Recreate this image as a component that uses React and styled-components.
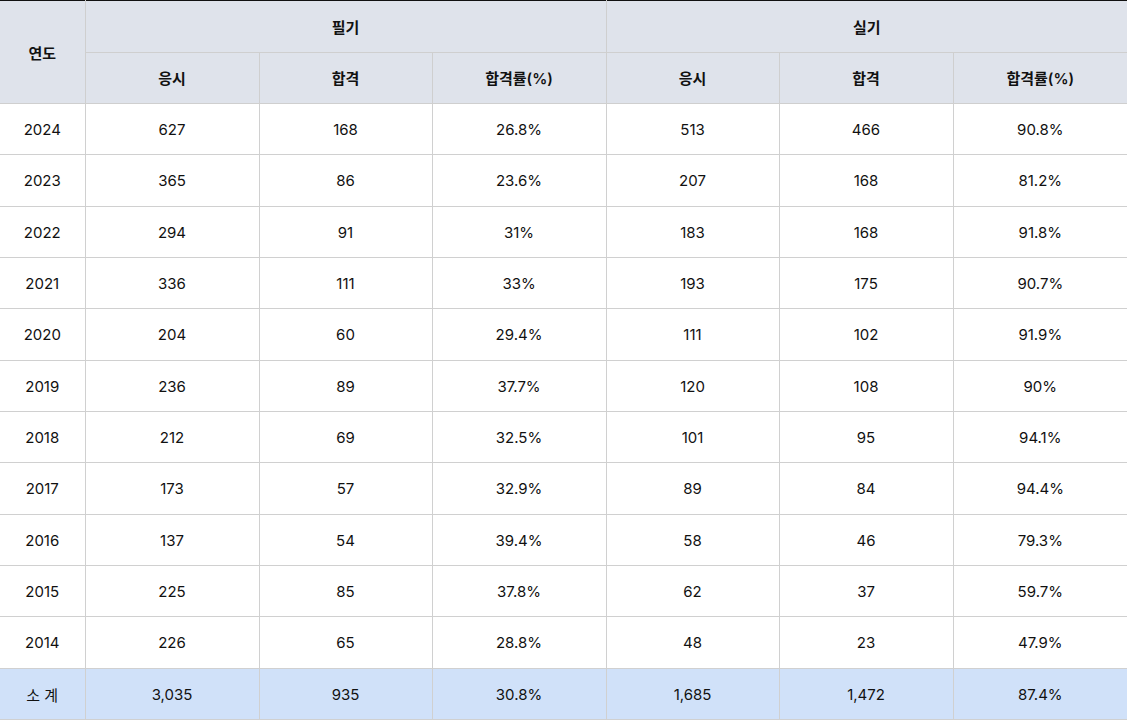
import React from "react";
import styled, { createGlobalStyle } from "styled-components";

const Global = createGlobalStyle`
  html, body { margin: 0; padding: 0; background: #fff; }
  body { font-family: Inter, "Noto Sans CJK KR", "Noto Sans", sans-serif; }
`;

const Table = styled.table`
  width: 1127px;
  border-collapse: collapse;
  table-layout: fixed;
  border-top: 1px solid #111;
  font-size: 15px;
  color: #111;
`;

const Col = styled.col`
  width: ${(p) => p.$w}px;
`;

const Th = styled.th`
  background: #dfe3eb;
  font-weight: 600;
  height: 50.5px;
  padding: 0;
  text-align: center;
  vertical-align: middle;
  border: 1px solid #cfcfcf;
  border-top: none;
  &:first-child { border-left: none; }
  &:last-child { border-right: none; }
`;

const Row = styled.tr`
  background: ${(p) => (p.$total ? "#d0e1f9" : "#fff")};
`;

const Td = styled.td`
  height: 49.33px;
  padding: 1px 0 0;
  text-align: center;
  vertical-align: middle;
  border: 1px solid #d0d0d0;
  &:first-child { border-left: none; }
  &:last-child { border-right: none; }
`;

const data = [
  ["2024", "627", "168", "26.8%", "513", "466", "90.8%"],
  ["2023", "365", "86", "23.6%", "207", "168", "81.2%"],
  ["2022", "294", "91", "31%", "183", "168", "91.8%"],
  ["2021", "336", "111", "33%", "193", "175", "90.7%"],
  ["2020", "204", "60", "29.4%", "111", "102", "91.9%"],
  ["2019", "236", "89", "37.7%", "120", "108", "90%"],
  ["2018", "212", "69", "32.5%", "101", "95", "94.1%"],
  ["2017", "173", "57", "32.9%", "89", "84", "94.4%"],
  ["2016", "137", "54", "39.4%", "58", "46", "79.3%"],
  ["2015", "225", "85", "37.8%", "62", "37", "59.7%"],
  ["2014", "226", "65", "28.8%", "48", "23", "47.9%"],
];
const total = ["소 계", "3,035", "935", "30.8%", "1,685", "1,472", "87.4%"];

export default function App() {
  return (
    <>
      <Global />
      <Table>
        <colgroup>
          <Col $w={85} />
          <Col $w={174} />
          <Col $w={173} />
          <Col $w={174} />
          <Col $w={173} />
          <Col $w={174} />
          <Col $w={174} />
        </colgroup>
        <thead>
          <tr>
            <Th rowSpan={2}>연도</Th>
            <Th colSpan={3}>필기</Th>
            <Th colSpan={3}>실기</Th>
          </tr>
          <tr>
            <Th>응시</Th>
            <Th>합격</Th>
            <Th>합격률(%)</Th>
            <Th>응시</Th>
            <Th>합격</Th>
            <Th>합격률(%)</Th>
          </tr>
        </thead>
        <tbody>
          {data.map((r) => (
            <Row key={r[0]}>
              {r.map((c, i) => (
                <Td key={i}>{c}</Td>
              ))}
            </Row>
          ))}
          <Row $total>
            {total.map((c, i) => (
              <Td key={i}>{c}</Td>
            ))}
          </Row>
        </tbody>
      </Table>
    </>
  );
}
